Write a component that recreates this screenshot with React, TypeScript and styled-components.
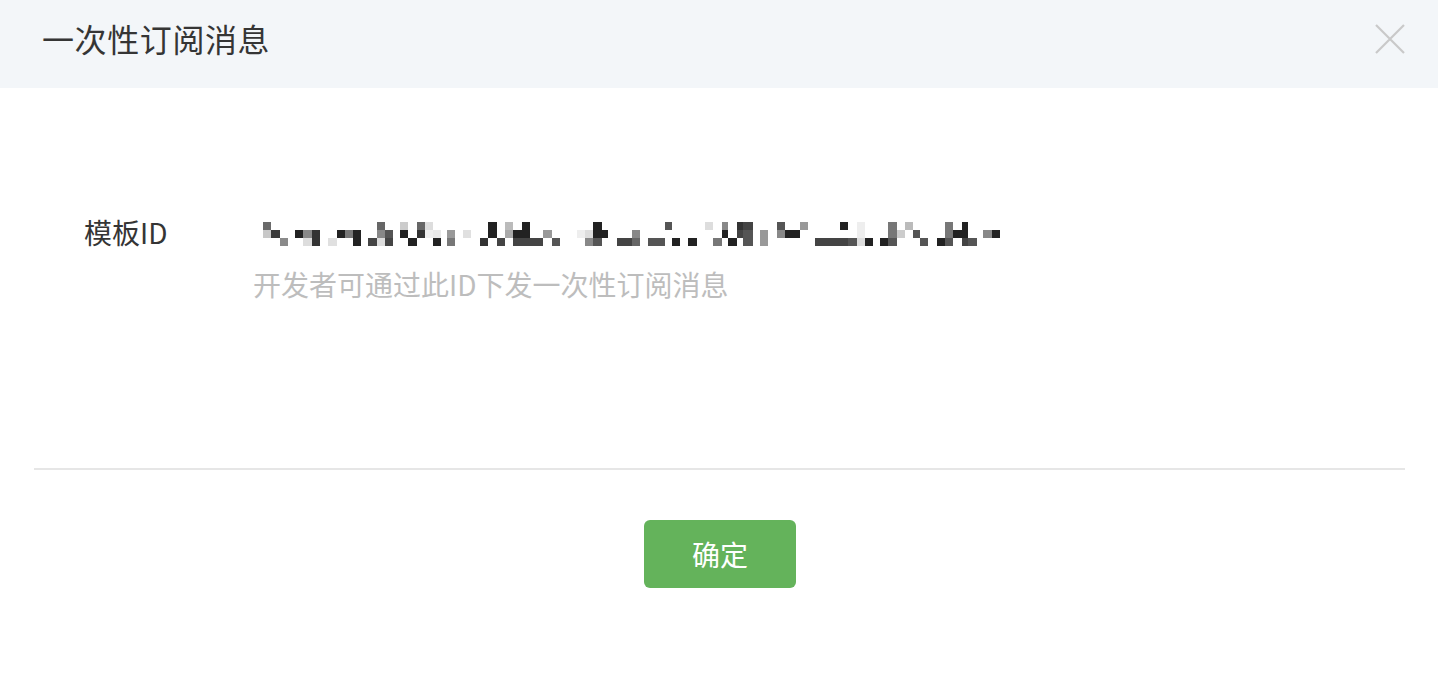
import React from "react";
import styled, { createGlobalStyle } from "styled-components";

const GlobalStyle = createGlobalStyle`
  html, body {
    margin: 0;
    padding: 0;
    background: #ffffff;
  }
  body {
    font-family: "Noto Sans CJK SC", "Noto Sans", sans-serif;
    -webkit-font-smoothing: antialiased;
  }
`;

const Dialog = styled.div`
  width: 1438px;
  height: 682px;
  background: #ffffff;
  display: flex;
  flex-direction: column;
`;

const Header = styled.div`
  height: 88px;
  background: #f3f6f9;
  display: flex;
  align-items: center;
  justify-content: space-between;
  padding: 0 32px 0 42px;
  box-sizing: border-box;
`;

const Title = styled.h3`
  margin: 0;
  font-size: 32px;
  font-weight: 400;
  line-height: 40px;
  letter-spacing: 0.6px;
  color: #353535;
  position: relative;
  top: -6px;
`;

const CloseButton = styled.button`
  width: 32px;
  height: 32px;
  border: 0;
  padding: 0;
  background: transparent;
  display: flex;
  align-items: center;
  justify-content: center;
  cursor: pointer;
  position: relative;
  top: -5px;
`;

const Body = styled.div`
  padding: 126px 0 0 84px;
  height: 254px;
  box-sizing: content-box;
`;

const FormRow = styled.div`
  display: grid;
  grid-template-columns: 169px 1fr;
`;

const Label = styled.label`
  font-size: 28px;
  line-height: 40px;
  color: #353535;
  position: relative;
  top: -2px;
`;

const ValueCol = styled.div`
  display: flex;
  flex-direction: column;
  gap: 10px;
`;

const ValueLine = styled.div`
  height: 40px;
  display: flex;
  align-items: center;
  padding-left: 10px;
`;

const Hint = styled.p`
  margin: 0;
  font-size: 28px;
  line-height: 40px;
  color: #bdbdbd;
`;

const Divider = styled.hr`
  margin: 0 33px 0 34px;
  border: 0;
  height: 2px;
  background: #e6e6e6;
`;

const Footer = styled.div`
  display: flex;
  justify-content: center;
  padding: 50px 0 0 2px;
`;

const PrimaryButton = styled.button`
  width: 152px;
  height: 68px;
  border: 0;
  border-radius: 6px;
  background: #64b35b;
  color: #ffffff;
  font-family: "Noto Sans CJK SC", "Noto Sans", sans-serif;
  font-size: 28px;
  line-height: 64px;
  padding: 0;
  cursor: pointer;
`;

// [x (px), row (0..2), color, width]
type Block = [number, number, string, number];

const BASE = 263;
const raw: Block[] = [
  [263, 0, "#6a6a6a", 8], [263, 1, "#c8c8c8", 8], [271, 1, "#3a3a3a", 9], [280, 2, "#8a8a8a", 8],
  [295, 1, "#222", 8], [303, 1, "#888", 9], [303, 2, "#ddd", 9], [312, 1, "#333", 8], [312, 2, "#333", 8],
  [328, 2, "#e0e0e0", 9], [337, 1, "#222", 8], [345, 1, "#777", 8], [353, 1, "#222", 8], [353, 2, "#222", 8],
  [368, 2, "#444", 9], [377, 0, "#666", 8], [377, 1, "#888", 8], [377, 2, "#ddd", 8], [385, 1, "#555", 8], [385, 2, "#444", 8],
  [400, 0, "#ccc", 8], [400, 1, "#222", 8], [408, 2, "#222", 9], [417, 0, "#666", 8], [417, 1, "#333", 8],
  [425, 0, "#ddd", 8], [425, 1, "#eee", 8], [433, 2, "#222", 8], [433, 1, "#e8e8e8", 8],
  [447, 1, "#999", 8], [447, 2, "#777", 8], [463, 1, "#e0e0e0", 8],
  [480, 2, "#333", 8], [488, 0, "#222", 9], [488, 1, "#222", 9], [497, 2, "#444", 8],
  [505, 0, "#bbb", 8], [505, 1, "#aaa", 8], [513, 1, "#222", 9], [513, 2, "#444", 9],
  [522, 0, "#222", 8], [522, 1, "#222", 8], [522, 2, "#444", 8], [530, 2, "#444", 13],
  [543, 1, "#999", 9], [552, 2, "#555", 8],
  [577, 1, "#eee", 8], [585, 1, "#ddd", 8], [585, 2, "#888", 8], [593, 0, "#222", 9], [593, 1, "#222", 9], [593, 2, "#555", 9],
  [602, 1, "#222", 6], [617, 2, "#444", 15],
  [632, 1, "#888", 8], [632, 2, "#666", 8], [648, 2, "#555", 17], [665, 0, "#555", 7], [672, 2, "#222", 8],
  [688, 2, "#222", 9], [705, 0, "#ddd", 8], [713, 2, "#777", 9], [722, 0, "#888", 6], [722, 1, "#222", 6],
  [728, 2, "#222", 9], [737, 0, "#333", 6], [737, 1, "#444", 6], [743, 0, "#444", 10], [743, 1, "#555", 10], [743, 2, "#555", 10],
  [760, 1, "#999", 8], [760, 2, "#999", 8], [777, 0, "#555", 8], [777, 1, "#888", 8], [785, 1, "#222", 15], [800, 0, "#999", 8],
  [815, 2, "#444", 25], [840, 0, "#222", 8], [840, 2, "#444", 8], [848, 2, "#555", 9],
  [857, 0, "#eee", 8], [857, 1, "#eee", 8], [857, 2, "#ddd", 8], [865, 2, "#222", 8],
  [880, 2, "#222", 8], [888, 0, "#777", 9], [888, 1, "#777", 9], [888, 2, "#555", 9], [897, 1, "#ccc", 8], [905, 0, "#bbb", 8],
  [913, 1, "#555", 7], [920, 2, "#555", 8],
  [937, 2, "#222", 8], [945, 0, "#777", 8], [945, 1, "#777", 8], [945, 2, "#555", 8], [953, 1, "#222", 9],
  [962, 0, "#222", 6], [962, 1, "#222", 6], [962, 2, "#444", 6], [968, 2, "#555", 9],
  [983, 1, "#888", 9], [992, 1, "#222", 8],
];

const MosaicId: React.FC = () => (
  <svg width="740" height="24" viewBox="0 0 740 24" aria-label="模板ID（已打码）">
    {raw.map(([x, row, color, w], i) => (
      <rect key={i} x={x - BASE} y={row * 8} width={w} height={8} fill={color} />
    ))}
  </svg>
);

const CloseIcon: React.FC = () => (
  <svg width="30" height="30" viewBox="0 0 30 30">
    <path d="M1 1 L29 29 M29 1 L1 29" stroke="#c9c9c9" strokeWidth="2.2" fill="none" />
  </svg>
);

export default function App() {
  return (
    <>
      <GlobalStyle />
      <Dialog>
        <Header>
          <Title>一次性订阅消息</Title>
          <CloseButton aria-label="关闭">
            <CloseIcon />
          </CloseButton>
        </Header>
        <Body>
          <FormRow>
            <Label>模板ID</Label>
            <ValueCol>
              <ValueLine>
                <MosaicId />
              </ValueLine>
              <Hint>开发者可通过此ID下发一次性订阅消息</Hint>
            </ValueCol>
          </FormRow>
        </Body>
        <Divider />
        <Footer>
          <PrimaryButton>确定</PrimaryButton>
        </Footer>
      </Dialog>
    </>
  );
}
